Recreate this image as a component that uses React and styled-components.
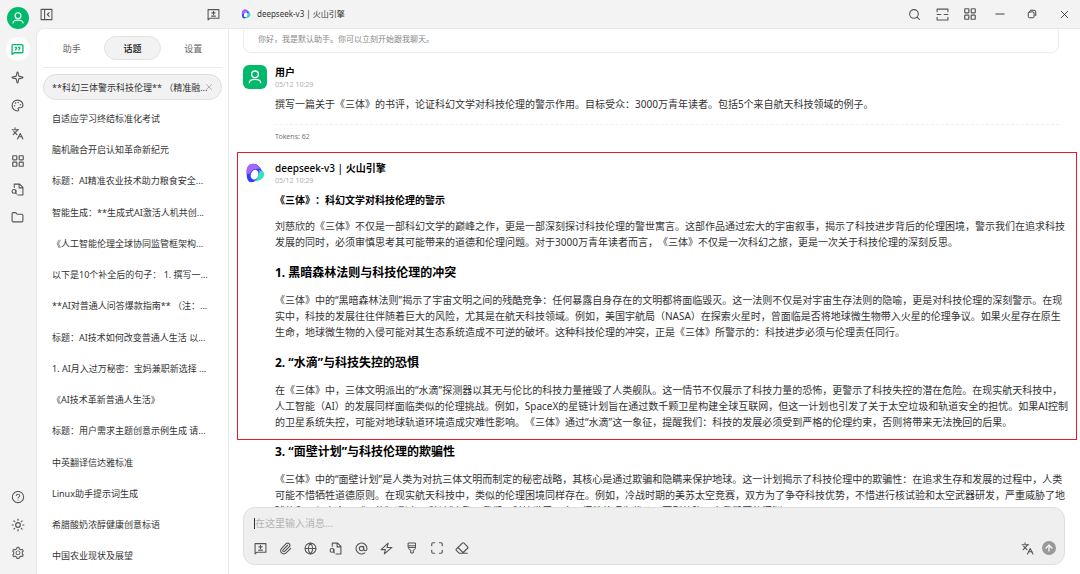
import React, { useState } from 'react';
import styled, { createGlobalStyle } from 'styled-components';
import {
	ArrowUp,
	AtSign,
	Eraser,
	Folder,
	Globe,
	Languages,
	LayoutGrid,
	Maximize,
	Palette,
	Paperclip,
	Search,
	Sparkle,
	Sun,
	X,
} from 'lucide-react';
import { AiOutlineQuestionCircle, AiOutlineSetting } from 'react-icons/ai';

const topics = [
	'**科幻三体警示科技伦理** （精准融...',
	'自适应学习终结标准化考试',
	'脑机融合开启认知革命新纪元',
	'标题：AI精准农业技术助力粮食安全...',
	'智能生成：**生成式AI激活人机共创...',
	'《人工智能伦理全球协同监管框架构...',
	'以下是10个补全后的句子： 1. 撰写一...',
	'**AI对普通人问答爆款指南** （注：...',
	'标题：AI技术如何改变普通人生活 以...',
	'1. AI月入过万秘密：宝妈兼职新选择 ...',
	'《AI技术革新普通人生活》',
	'标题：用户需求主题创意示例生成 请...',
	'中英翻译信达雅标准',
	'Linux助手提示词生成',
	'希腊酸奶浓醇健康创意标语',
	'中国农业现状及展望',
];

const sections = [
	{
		title: '1. 黑暗森林法则与科技伦理的冲突',
		text: '《三体》中的“黑暗森林法则”揭示了宇宙文明之间的残酷竞争：任何暴露自身存在的文明都将面临毁灭。这一法则不仅是对宇宙生存法则的隐喻，更是对科技伦理的深刻警示。在现实中，科技的发展往往伴随着巨大的风险，尤其是在航天科技领域。例如，美国宇航局（NASA）在探索火星时，曾面临是否将地球微生物带入火星的伦理争议。如果火星存在原生生命，地球微生物的入侵可能对其生态系统造成不可逆的破坏。这种科技伦理的冲突，正是《三体》所警示的：科技进步必须与伦理责任同行。',
	},
	{
		title: '2. “水滴”与科技失控的恐惧',
		text: '在《三体》中，三体文明派出的“水滴”探测器以其无与伦比的科技力量摧毁了人类舰队。这一情节不仅展示了科技力量的恐怖，更警示了科技失控的潜在危险。在现实航天科技中，人工智能（AI）的发展同样面临类似的伦理挑战。例如，SpaceX的星链计划旨在通过数千颗卫星构建全球互联网，但这一计划也引发了关于太空垃圾和轨道安全的担忧。如果AI控制的卫星系统失控，可能对地球轨道环境造成灾难性影响。《三体》通过“水滴”这一象征，提醒我们：科技的发展必须受到严格的伦理约束，否则将带来无法挽回的后果。',
	},
	{
		title: '3. “面壁计划”与科技伦理的欺骗性',
		text: '《三体》中的“面壁计划”是人类为对抗三体文明而制定的秘密战略，其核心是通过欺骗和隐瞒来保护地球。这一计划揭示了科技伦理中的欺骗性：在追求生存和发展的过程中，人类可能不惜牺牲道德原则。在现实航天科技中，类似的伦理困境同样存在。例如，冷战时期的美苏太空竞赛，双方为了争夺科技优势，不惜进行核试验和太空武器研发，严重威胁了地球的和平与安全。《三体》通过“面壁计划”警示我们：科技发展不应以牺牲伦理为代价，否则将陷入自我毁灭的深渊。',
	},
];

const LineSvg = ({ size = 12, width = 2, children }) => (
	<svg
		width={size}
		height={size}
		viewBox='0 0 24 24'
		fill='none'
		stroke='currentColor'
		strokeWidth={width}
		strokeLinecap='round'
		strokeLinejoin='round'
	>
		{children}
	</svg>
);

const UserIcon = ({ size }) => (
	<LineSvg size={size}>
		<circle cx='12' cy='8' r='5' />
		<path d='M3.5 20.5c0-3.500 3.200-5 8.500-5s8.500 1.500 8.500 5' />
	</LineSvg>
);

const ChatIcon = () => (
	<LineSvg size={13} width={2.4}>
		<path d='M2 21V5a2 2 0 0 1 2-2h16a2 2 0 0 1 2 2v11a2 2 0 0 1-2 2H6z' />
		<path d='M8 8h2v2.500l-1.500 2M14 8h2v2.500l-1.500 2' />
	</LineSvg>
);

const NewTopicIcon = () => (
	<LineSvg size={13}>
		<path d='M2 22V3h20v16H5z' />
		<path d='M12 6v6M9 9h6M8.500 15h7' />
	</LineSvg>
);

const PanelIcon = () => (
	<LineSvg size={13}>
		<path d='M2 2.500h20v19H2zM8.500 2.500v19M17 8.500 13.500 12l3.500 3.500' />
	</LineSvg>
);

const FileSearchIcon = () => (
	<LineSvg size={13}>
		<path d='M6 8V2h10l6 6v14h-9M15 2v7h7' />
		<circle cx='5.500' cy='15.500' r='3.500' />
		<path d='M9 13v6l1 1' />
	</LineSvg>
);

const BoltIcon = () => (
	<LineSvg size={13}>
		<path d='M15 2 2 14h8l-2 8L22 10h-9z' />
	</LineSvg>
);

const BrushIcon = () => (
	<LineSvg size={12}>
		<path d='M5 2h14v9H5zM5 7.500h14M5 11c0 4 2 5 4.500 5v6h5v-6c2.500 0 4.500-1 4.500-5' />
	</LineSvg>
);

const ScanIcon = () => (
	<LineSvg size={13}>
		<path d='M2 7V2h20v5M2 17v5h20v-5M2 12h7M15 12h7' />
	</LineSvg>
);

const RestoreIcon = () => (
	<LineSvg size={10}>
		<rect x='3' y='7' width='14' height='14' rx='3' />
		<path d='M8 3h9a4 4 0 0 1 4 4v9' />
	</LineSvg>
);

const MinimizeIcon = () => (
	<LineSvg size={10}>
		<path d='M2 12h20' />
	</LineSvg>
);

// Teal back, blue stripe and purple cap around a white oval
const ModelLogo = ({ size }) => (
	<svg width={size} height={size} viewBox='0 0 24 24'>
		<path d='M15 5c4 2 8 5 8 8.500 0 4.500-5 8-10.500 8.500z' fill='#36e0c0' />
		<path d='M2 11C2 5 5 1 10 1c4 0 8 3 10 8-2 1-3 3-4 6-2 5-4 8-8.500 8C3 23 2 18 2 11z' fill='#2f3ffb' />
		<path d='M2 13C1 6 4 1 9.500 1 14 1 17 4 18.500 7 12 6 8 8 6 13z' fill='#a667fb' />
		<path d='M17 8c3 1 4 4 3 6-1 4-4 7-8 8 4-4 6-8 5-14z' fill='#36e0c0' />
		<ellipse cx='11.500' cy='14' rx='4.500' ry='6' transform='rotate(20 11.500 14)' fill='#fff' />
	</svg>
);

function Section({ title, text }) {
	return (
		<>
			<Heading>{title}</Heading>
			<p>{text}</p>
		</>
	);
}

function App() {
	const [active, setActive] = useState(0);
	const [msg, setMsg] = useState('');

	return (
		<Shell>
			<GlobalStyle />
			<Rail>
				<RailAvatar><UserIcon size={14} /></RailAvatar>
				<RailButton $active aria-label='聊天'><ChatIcon /></RailButton>
				<RailButton aria-label='智能体'><Sparkle size={13} /></RailButton>
				<RailButton aria-label='绘画'><Palette size={13} /></RailButton>
				<RailButton aria-label='翻译'><Languages size={13} /></RailButton>
				<RailButton aria-label='小程序'><LayoutGrid size={14} /></RailButton>
				<RailButton aria-label='知识库'><FileSearchIcon /></RailButton>
				<RailButton aria-label='文件'><Folder size={13} /></RailButton>
				<Spacer />
				<RailButton aria-label='帮助'><AiOutlineQuestionCircle size={14} /></RailButton>
				<RailButton aria-label='主题'><Sun size={14} /></RailButton>
				<RailButton aria-label='设置'><AiOutlineSetting size={14} /></RailButton>
			</Rail>
			<Workspace>
				<TopBar>
					<TopLeft>
						<IconButton aria-label='收起'><PanelIcon /></IconButton>
						<IconButton aria-label='新建话题'><NewTopicIcon /></IconButton>
					</TopLeft>
					<ModelButton>
						<LogoCircle $size={12}><ModelLogo size={10} /></LogoCircle>
						deepseek-v3 | 火山引擎
					</ModelButton>
					<TopTools>
						<IconButton aria-label='搜索'><Search size={13} /></IconButton>
						<IconButton aria-label='展开'><ScanIcon /></IconButton>
						<IconButton aria-label='小程序'><LayoutGrid size={14} /></IconButton>
					</TopTools>
					<WindowTools>
						<IconButton $dark aria-label='最小化'><MinimizeIcon /></IconButton>
						<IconButton $dark aria-label='还原'><RestoreIcon /></IconButton>
						<IconButton $dark aria-label='关闭'><X size={13} strokeWidth={1.5} /></IconButton>
					</WindowTools>
				</TopBar>
				<Content>
					<Sidebar>
						<Tabs>
							<Tab>助手</Tab>
							<Tab $active>话题</Tab>
							<Tab>设置</Tab>
						</Tabs>
						<TopicList>
							{topics.map((topic, i) => (
								<li key={topic}>
									<Topic $active={i === active} onClick={() => setActive(i)}>
										{topic}
										{i === active && <X size={10} strokeWidth={1.5} />}
									</Topic>
								</li>
							))}
						</TopicList>
					</Sidebar>
					<Chat>
						<Feed>
							<Welcome>你好，我是默认助手。你可以立刻开始跟我聊天。</Welcome>
							<Message>
								<UserAvatar><UserIcon size={16} /></UserAvatar>
								<div>
									<Name>用户</Name>
									<Time>05/12 10:29</Time>
									<p>
										撰写一篇关于《三体》的书评，论证科幻文学对科技伦理的警示作用。目标受众：3000万青年读者。包括5个来自航天科技领域的例子。
									</p>
									<Tokens>Tokens: 62</Tokens>
								</div>
							</Message>
							<Highlight>
								<LogoCircle $size={24}><ModelLogo size={20} /></LogoCircle>
								<div>
									<Name><span>deepseek-v3 | </span>火山引擎</Name>
									<Time>05/12 10:29</Time>
									<Lead>《三体》：科幻文学对科技伦理的警示</Lead>
									<p>
										刘慈欣的《三体》不仅是一部科幻文学的巅峰之作，更是一部深刻探讨科技伦理的警世寓言。这部作品通过宏大的宇宙叙事，揭示了科技进步背后的伦理困境，警示我们在追求科技发展的同时，必须审慎思考其可能带来的道德和伦理问题。对于3000万青年读者而言，《三体》不仅是一次科幻之旅，更是一次关于科技伦理的深刻反思。
									</p>
									<Section {...sections[0]} />
									<Section {...sections[1]} />
								</div>
							</Highlight>
							<Continued>
								<Section {...sections[2]} />
							</Continued>
						</Feed>
						<Composer onSubmit={(e) => e.preventDefault()}>
							<InputRow>
								<Caret />
								<textarea
									rows={1}
									aria-label='消息'
									placeholder='在这里输入消息...'
									value={msg}
									onChange={(e) => setMsg(e.target.value)}
								/>
							</InputRow>
							<ToolRow>
								<ToolGroup>
									<IconButton aria-label='新建话题'><NewTopicIcon /></IconButton>
									<IconButton aria-label='附件'><Paperclip size={13} /></IconButton>
									<IconButton aria-label='联网'><Globe size={13} /></IconButton>
									<IconButton aria-label='知识库'><FileSearchIcon /></IconButton>
									<IconButton aria-label='提及模型'><AtSign size={13} /></IconButton>
									<IconButton aria-label='快捷短语'><BoltIcon /></IconButton>
									<IconButton aria-label='清除'><BrushIcon /></IconButton>
									<IconButton aria-label='展开'><Maximize size={14} /></IconButton>
									<IconButton aria-label='清除上下文'><Eraser size={14} /></IconButton>
								</ToolGroup>
								<SendGroup>
									<IconButton aria-label='翻译'><Languages size={13} /></IconButton>
									<SendButton aria-label='发送'><ArrowUp size={10} strokeWidth={3} /></SendButton>
								</SendGroup>
							</ToolRow>
						</Composer>
					</Chat>
				</Content>
			</Workspace>
		</Shell>
	);
}

const GlobalStyle = createGlobalStyle`
	* {
		box-sizing: border-box;
	}

	body {
		margin: 0;
		background: #f3f3f3;
		color: #333;
		font-family: 'Noto Sans', 'Noto Sans CJK SC', sans-serif;
		font-size: 10px;
		line-height: 16px;
		text-spacing-trim: space-all;
	}

	button,
	textarea {
		padding: 0;
		border: none;
		background: none;
		color: inherit;
		font: inherit;
		text-spacing-trim: inherit;
	}

	p,
	h2,
	h3,
	ul {
		margin: 0;
		padding: 0;
	}

	li {
		list-style: none;
	}

	svg {
		display: block;
		flex-shrink: 0;
	}
`;

const Shell = styled.div`
	display: flex;
	height: 100vh;
	overflow: hidden;
`;

const Rail = styled.nav`
	width: 36px;
	padding: 7px 1px 9px 0;
	display: flex;
	flex-direction: column;
	align-items: center;
	gap: 4px;
`;

const RailAvatar = styled.div`
	display: grid;
	place-items: center;
	width: 22px;
	height: 22px;
	margin-bottom: 4px;
	border-radius: 50%;
	background: #00b96b;
	color: #fff;
`;

const RailButton = styled.button`
	display: grid;
	place-items: center;
	width: 24px;
	height: 24px;
	border-radius: 50%;
	background: ${(p) => (p.$active ? '#fff' : 'none')};
	color: ${(p) => (p.$active ? '#00b96b' : '#555')};
`;

const Spacer = styled.div`
	flex: 1;
`;

const Workspace = styled.div`
	flex: 1;
	min-width: 0;
	display: flex;
	flex-direction: column;
`;

const TopBar = styled.header`
	display: flex;
	align-items: center;
	height: 28px;
`;

const TopLeft = styled.div`
	display: flex;
	justify-content: space-between;
	width: 192px;
	padding: 0 7px 0 2px;
`;

const IconButton = styled.button`
	display: grid;
	place-items: center;
	width: 16px;
	height: 16px;
	color: ${(p) => (p.$dark ? '#222' : '#555')};
`;

const ModelButton = styled.button`
	display: flex;
	align-items: center;
	gap: 5px;
	margin: 0 auto 0 12px;
	font-size: 8px;
`;

const LogoCircle = styled.div`
	display: grid;
	place-items: center;
	width: ${(p) => p.$size}px;
	height: ${(p) => p.$size}px;
	border-radius: 50%;
	background: #fff;
`;

const TopTools = styled.div`
	display: flex;
	gap: 12px;
	margin-right: 14px;
`;

const WindowTools = styled.div`
	display: flex;
	gap: 16px;
	padding-right: 8px;
`;

const Content = styled.div`
	flex: 1;
	min-height: 0;
	display: flex;
	border: 1px solid #e8e8e8;
	border-width: 1px 0 0 1px;
	border-top-left-radius: 8px;
	background: #fff;
`;

const Sidebar = styled.aside`
	width: 192px;
	padding: 7px 6px 5px;
	border-right: 1px solid #e8e8e8;
	display: flex;
	flex-direction: column;
	font-size: 9px;
`;

const Tabs = styled.div`
	display: grid;
	grid-template-columns: repeat(3, 1fr);
	gap: 3px;
	padding-bottom: 7px;
	margin-bottom: 6px;
	border-bottom: 1px solid #ececec;
`;

const Tab = styled.button`
	height: 24px;
	padding-top: 1px;
	border: 1px solid ${(p) => (p.$active ? '#e3e3e3' : 'transparent')};
	border-radius: 12px;
	background: ${(p) => (p.$active ? '#f2f2f2' : 'none')};
	color: ${(p) => (p.$active ? '#111' : '#666')};
	font-weight: ${(p) => (p.$active ? 500 : 400)};
`;

const TopicList = styled.ul`
	flex: 1;
	display: flex;
	flex-direction: column;
	justify-content: space-between;
`;

const Topic = styled.button`
	position: relative;
	display: block;
	width: 100%;
	height: 26px;
	padding: 1px 0 0 8px;
	border: 1px solid ${(p) => (p.$active ? '#dedede' : 'transparent')};
	border-radius: 13px;
	background: ${(p) => (p.$active ? '#f2f2f2' : 'none')};
	text-align: left;
	white-space: nowrap;

	/* the close cross lies over the end of the title */
	svg {
		position: absolute;
		top: 7px;
		right: 7px;
		color: #888;
	}
`;

const Chat = styled.main`
	flex: 1;
	min-width: 0;
	display: flex;
	flex-direction: column;
`;

const Feed = styled.div`
	flex: 1;
	min-height: 0;
	overflow: hidden;
`;

const Welcome = styled.div`
	margin: 0 21px 12px 14px;
	padding: 2px 14px 5px;
	border: 1px solid #ececec;
	border-top: none;
	border-radius: 0 0 8px 8px;
	color: #888;
	font-size: 8px;
`;

const Message = styled.article`
	display: grid;
	grid-template-columns: 24px 1fr;
	align-items: start;
	gap: 8px;
	padding: 0 21px 7px 14px;
`;

/* The part of the answer that is framed in red */
const Highlight = styled(Message)`
	margin: 0 3px 0 8px;
	padding: 8px 7px 9px 5px;
	border: 1px solid #ec1c24;
`;

const UserAvatar = styled.div`
	display: grid;
	place-items: center;
	width: 24px;
	height: 24px;
	border-radius: 6px;
	background: #00b96b;
	color: #fff;
`;

const Name = styled.h2`
	color: #000;
	font-size: 10px;
	line-height: 14px;
	font-weight: 600;

	span {
		font-weight: 500;
	}
`;

const Time = styled.div`
	margin-bottom: 5px;
	color: #b0b0b0;
	font-size: 7px;
	line-height: 12px;
`;

const Lead = styled.p`
	margin-bottom: 10px;
	color: #000;
	font-weight: 600;
`;

const Heading = styled.h3`
	margin: 14px 0 10px;
	color: #000;
	font-size: 12px;
	line-height: 18px;
	font-weight: 700;
`;

const Tokens = styled.div`
	margin-top: 12px;
	padding-top: 4px;
	border-top: 1px dashed #f0f0f0;
	color: #777;
	font-size: 7px;
`;

const Continued = styled.div`
	padding: 0 11px 0 46px;

	${Heading} {
		margin-top: 3px;
	}
`;

const Composer = styled.form`
	margin: 0 15px 9px 14px;
	padding: 7px 8px 8px;
	border: 1px solid #dedede;
	border-radius: 12px;
	background: #efefef;
`;

const InputRow = styled.div`
	display: flex;
	align-items: center;
	margin-bottom: 9px;

	textarea {
		flex: 1;
		height: 16px;
		resize: none;
		outline: none;

		&::placeholder {
			color: #b4b4b4;
		}
	}
`;

const Caret = styled.span`
	width: 1px;
	height: 11px;
	margin-left: 2px;
	background: #333;
`;

const ToolRow = styled.div`
	display: flex;
	justify-content: space-between;
	align-items: center;
`;

const ToolGroup = styled.div`
	display: flex;
	justify-content: space-between;
	width: 218px;
`;

const SendGroup = styled.div`
	display: flex;
	align-items: center;
	gap: 7px;
`;

const SendButton = styled.button`
	display: grid;
	place-items: center;
	width: 14px;
	height: 14px;
	border-radius: 50%;
	background: #999;
	color: #fff;
`;

export default App;
